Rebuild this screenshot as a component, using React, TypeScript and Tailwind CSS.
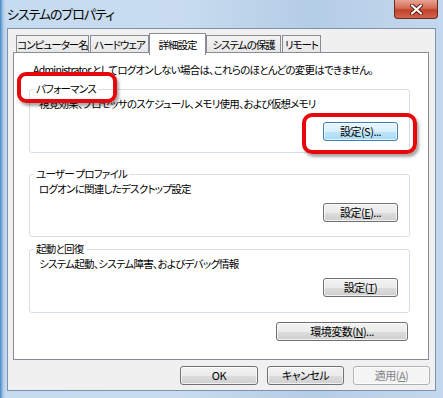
import React from "react";

const font = "font-['Noto_Sans_CJK_JP','Noto_Sans',sans-serif] [font-feature-settings:'palt']";
const txt = "text-[10.5px] leading-[14px] tracking-[-0.75px] whitespace-nowrap";

function Btn({ children, w = "w-[75px]", variant = "normal" }: { children: React.ReactNode; w?: string; variant?: "normal" | "focus" | "disabled" }) {
  const cls =
    variant === "focus"
      ? "border-[#3c7fb1] bg-[linear-gradient(#eaf6fd_0%,#d9f0fc_50%,#bee6fd_51%,#a7d9f5_100%)] text-black"
      : variant === "disabled"
      ? "border-[#adb2b5] bg-[#f4f4f4] text-[#838383]"
      : "border-[#707070] bg-[linear-gradient(#f2f2f2_0%,#ebebeb_50%,#dddddd_51%,#cfcfcf_100%)] text-black";
  return (
    <div className={`${w} h-[19px] rounded-[3px] border ${cls} flex items-center justify-center text-[11px] leading-none tracking-[-0.5px] whitespace-nowrap shadow-[inset_0_0_0_1px_rgba(255,255,255,0.7)]`}>
      {children}
    </div>
  );
}

function Group({ label, desc, btn, h = "h-[64px]", focus = false, btnGap = "mt-[7px]" }: { label: string; desc: string; btn: React.ReactNode; h?: string; focus?: boolean; btnGap?: string }) {
  return (
    <div className={`relative ml-[15px] w-[381px] ${h} rounded-[3px] border border-[#d5dfe5] flex flex-col`}>
      <div className={`absolute -top-[8px] left-[4px] bg-white px-[2px] ${txt}`}>{label}</div>
      <div className={`pl-[9px] pt-[7px] ${txt}`}>{desc}</div>
      <div className={`flex justify-end pr-[11px] ${btnGap}`}>
        <Btn variant={focus ? "focus" : "normal"}>{btn}</Btn>
      </div>
    </div>
  );
}

const tabTxt = "text-[10.5px] tracking-[-1px] whitespace-nowrap";

function Tab({ children, selected = false, w }: { children: React.ReactNode; selected?: boolean; w: string }) {
  return selected ? (
    <div className={`${w} h-[22px] -mx-[1px] z-10 border border-b-0 border-[#898c95] bg-white flex items-center justify-center ${tabTxt} relative top-[1px]`}>
      {children}
    </div>
  ) : (
    <div className={`${w} h-[19px] mt-[3px] border border-b-0 border-[#898c95] bg-[linear-gradient(#f3f3f3,#e5e5e5)] flex items-center justify-center ${tabTxt}`}>
      {children}
    </div>
  );
}

export default function App() {
  return (
    <div className={`${font} relative w-[443px] h-[398px] overflow-hidden text-black bg-[linear-gradient(90deg,#3f86c7_0px,#a9c8e6_3px,#c5dbf0_6px,#c9dcef_40%,#b4cde6_70%,#c3d8ee_100%)]`}>
      {/* title bar */}
      <div className="h-[28px] flex">
        <div className="pl-[7px] pt-[4px] text-[13px] leading-[20px] tracking-[-1.1px] text-black whitespace-nowrap">システムのプロパティ</div>
        <div className="ml-auto mr-[5px] w-[44px] h-[19px] rounded-b-[4px] border border-t-0 border-[#6b2b22] bg-[linear-gradient(#e8a493_0%,#d56b55_45%,#c3422b_55%,#d0644a_100%)] flex items-center justify-center">
          <svg width="13" height="11" viewBox="0 0 13 11">
            <path d="M2 1.5 L11 9.5 M11 1.5 L2 9.5" stroke="#5a1a12" strokeWidth="4" strokeLinecap="round" />
            <path d="M2 1.5 L11 9.5 M11 1.5 L2 9.5" stroke="#ffffff" strokeWidth="2.2" strokeLinecap="round" />
          </svg>
        </div>
      </div>
      {/* client */}
      <div className="mx-[7px] h-[363px] border border-[#7d93ab] bg-[#f0f0f0] flex flex-col">
        {/* tabs */}
        <div className="flex pl-[8px] pt-[3px] h-[23px] items-start">
          <Tab w="w-[73px]">コンピューター名</Tab>
          <div className="w-[1px]" />
          <Tab w="w-[59px]">ハードウェア</Tab>
          <div className="w-[1px]" />
          <Tab selected w="w-[57px]">詳細設定</Tab>
          <div className="w-[1px]" />
          <Tab w="w-[75px]">システムの保護</Tab>
          <div className="w-[1px]" />
          <Tab w="w-[39px]">リモート</Tab>
        </div>
        {/* panel */}
        <div className="ml-[5px] w-[416px] h-[308px] border border-[#898c95] bg-white flex flex-col">
          <div className={`pl-[19px] pt-[10px] ${txt}`}>
            Administrator としてログオンしない場合は、これらのほとんどの変更はできません。
          </div>
          <div className="h-[12px]" />
          <Group label="パフォーマンス" desc="視覚効果、プロセッサのスケジュール、メモリ使用、および仮想メモリ" btn="設定(S)..." focus btnGap="mt-[11px]" />
          <div className="h-[21px]" />
          <Group label="ユーザー プロファイル" desc="ログオンに関連したデスクトップ設定" btn={<span>設定(<u>E</u>)...</span>} h="h-[63px]" />
          <div className="h-[12px]" />
          <Group label="起動と回復" desc="システム起動、システム障害、およびデバッグ情報" btn={<span>設定(<u>T</u>)</span>} />
          <div className="flex justify-end pr-[20px] mt-[9px]">
            <Btn w="w-[132px]">
              <span>環境変数(<u>N</u>)...</span>
            </Btn>
          </div>
        </div>
        {/* bottom buttons */}
        <div className="flex justify-end gap-[9px] pr-[5px] mt-[6px]">
          <Btn w="w-[78px]">OK</Btn>
          <Btn w="w-[77px]">キャンセル</Btn>
          <Btn w="w-[77px]" variant="disabled">
            <span>適用(<u>A</u>)</span>
          </Btn>
        </div>
      </div>
      {/* red highlight overlays */}
      <div className="absolute left-[17px] top-[72px] w-[100px] h-[31px] rounded-[9px] border-[4px] border-[#e8080c] shadow-[2px_3px_3px_rgba(0,0,0,0.35)]" />
      <div className="absolute left-[302px] top-[113px] w-[115px] h-[41px] rounded-[10px] border-[4px] border-[#e8080c] shadow-[2px_3px_3px_rgba(0,0,0,0.35)]" />
    </div>
  );
}
